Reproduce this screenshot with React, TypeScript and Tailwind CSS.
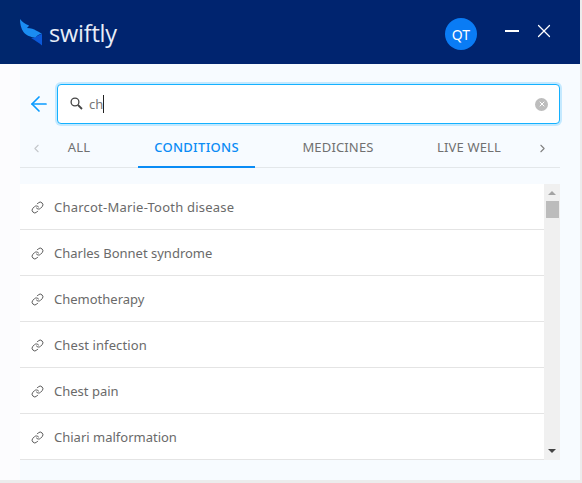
import React from "react";
import { ChevronLeft, ChevronRight, Link, ArrowLeft, X } from "lucide-react";

const items = [
  { t: "Charcot-Marie-Tooth disease", c: "tracking-[0.22px]" },
  { t: "Charles Bonnet syndrome", c: "" },
  { t: "Chemotherapy", c: "" },
  { t: "Chest infection", c: "tracking-[0.1px]" },
  { t: "Chest pain", c: "" },
  { t: "Chiari malformation", c: "" },
];

function Logo() {
  return (
    <svg width="24" height="27" viewBox="0 0 24 27" className="shrink-0">
      <path d="M0 0 C2 3 5 5 9 6.5 C8.5 7.5 8 8 7 9 C11 9 14 10 16 11.5 C18 12.5 20 13.5 22 15 C19 15 17 16.5 15.5 19 C11 18 6 16.5 3.5 13 C1 9.5 0 5 0 0 Z" fill="#1a8cf2" />
      <path d="M11 19.2 C14 19.5 16 18 18 16.5 L22 15 L22 26.5 C19 24 15 21 11 19.2 Z" fill="#0b58d8" />
    </svg>
  );
}

export default function App() {
  return (
    <div className="w-[582px] h-[483px] bg-[#ececec] font-['Noto_Sans',sans-serif] overflow-hidden">
      <div className="w-[580px] h-[480px] bg-[linear-gradient(90deg,#fcfcfe_20px,#f7fbff_20px)] flex flex-col">
        <header className="h-16 shrink-0 bg-[linear-gradient(90deg,#00276d_20px,#00246f_20px)] flex items-center pl-5 pr-[25px]">
          <Logo />
          <span className="ml-[5px] text-[23.5px] leading-none font-medium text-[#e8eef8] font-['Open_Sans',sans-serif] mt-[3px] tracking-[-0.2px]">swiftly</span>
          <div className="ml-auto mt-1 w-8 h-8 rounded-full bg-[#0a7cf5] text-white text-[14px] flex items-center justify-center">QT</div>
          <div className="ml-[28px] w-[14px] h-[2px] bg-white -mt-[2px]" />
          <X className="ml-[14px] text-white -mt-[2px]" size={22} strokeWidth={1.3} />
        </header>
        <main className="flex-1 flex flex-col px-5 min-h-0">
          <div className="mt-5 flex items-center">
            <ArrowLeft className="ml-[7px] mr-[6px] text-[#0a9bff]" size={24} strokeWidth={1.7} />
            <div className="w-[503px] h-10 bg-white rounded border border-[#14b1ff] shadow-[0_0_0_2px_#c4e9ff] flex items-center pl-3 pr-[11px]">
              <svg width="13" height="13" viewBox="0 0 13 13" fill="none" stroke="#444" className="shrink-0 -mt-[2px]">
                <circle cx="5" cy="5" r="3.9" strokeWidth="1.3" />
                <path d="M8 8 L12 12" strokeWidth="1.8" />
              </svg>
              <span className="ml-[6px] text-[13px] text-[#777] mt-px">ch</span>
              <span className="w-px h-[18px] bg-[#222]" />
              <span className="ml-auto w-[13px] h-[13px] rounded-full bg-[#bdbdbd] flex items-center justify-center">
                <X size={8} className="text-white" strokeWidth={3} />
              </span>
            </div>
          </div>
          <div className="mt-[5px] h-[39px] shrink-0 border-b border-[#e3e7ea] flex items-stretch">
            <div className="w-8 flex items-center justify-center">
              <ChevronLeft size={13} className="text-[#c4c7cb]" />
            </div>
            <div className="flex gap-8 text-[13px] tracking-[0.15px]">
              <div className="w-[54px] flex items-center justify-center text-[#707070]">ALL</div>
              <div className="w-[117px] flex items-center justify-center text-[#0a8cf5] font-medium tracking-[0.3px] border-b-2 border-[#0a8cf5] -mb-px">CONDITIONS</div>
              <div className="w-[102px] flex items-center justify-center text-[#707070]">MEDICINES</div>
              <div className="w-[96px] flex items-center justify-center text-[#707070]">LIVE WELL</div>
            </div>
            <div className="flex-1 flex items-center justify-end pr-[11px]">
              <ChevronRight size={13} className="text-[#808080]" />
            </div>
          </div>
          <div className="mt-4 h-[276px] flex">
            <ul className="w-[524px] bg-white">
              {items.map(({ t, c }) => (
                <li key={t} className="h-[46px] border-b border-[#e4e4e4] flex items-center pl-[11px] text-[13px] text-[#6a6a6a]">
                  <Link size={13} className="text-[#555] mr-[10px] shrink-0 mt-px" strokeWidth={1.8} />
                  <span className={"mt-[2px] " + c}>{t}</span>
                </li>
              ))}
            </ul>
            <div className="w-4 bg-[#f0f0f0] flex flex-col items-center">
              <svg width="8" height="4" viewBox="0 0 8 4" className="mt-[7px]"><path d="M4 0 L8 4 L0 4 Z" fill="#a3a3a3" /></svg>
              <div className="mt-[6px] w-[13px] h-[17px] bg-[#bcbcbc]" />
              <svg width="8" height="4" viewBox="0 0 8 4" className="mt-auto mb-[7px]"><path d="M0 0 L8 0 L4 4 Z" fill="#444" /></svg>
            </div>
          </div>
        </main>
      </div>
    </div>
  );
}
